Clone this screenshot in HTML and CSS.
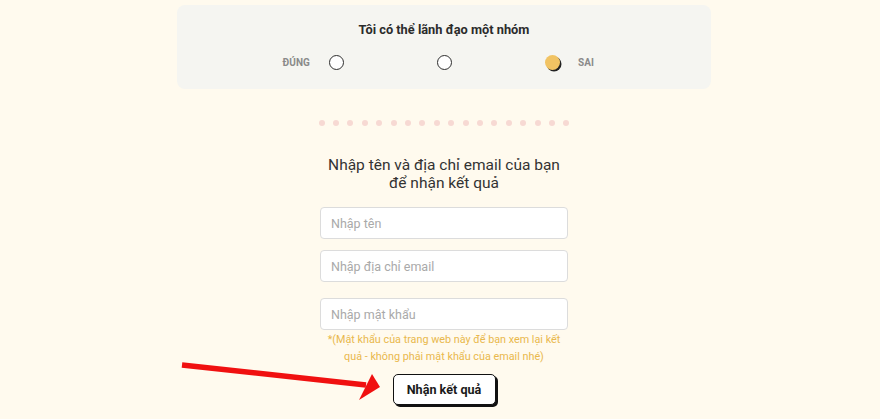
FILE: index.html
```html
<!DOCTYPE html>
<html lang="vi">
<head>
<meta charset="utf-8">
<title>Quiz</title>
<link rel="stylesheet" href="styles.css">
</head>
<body>
<main class="page">
  <section class="card">
    <h2 class="question">Tôi có thể lãnh đạo một nhóm</h2>
    <div class="scale">
      <span class="label label-left">ĐÚNG</span>
      <span class="radio"></span>
      <span class="radio"></span>
      <span class="radio radio-on"></span>
      <span class="label label-right">SAI</span>
    </div>
  </section>

  <div class="dots">
    <i></i><i></i><i></i><i></i><i></i><i></i><i></i><i></i><i></i>
    <i></i><i></i><i></i><i></i><i></i><i></i><i></i><i></i><i></i>
  </div>

  <h1 class="heading">Nhập tên và địa chỉ email của bạn<br>để nhận kết quả</h1>

  <form class="form">
    <input class="field" type="text" placeholder="Nhập tên">
    <input class="field" type="email" placeholder="Nhập địa chỉ email">
    <input class="field field-pass" type="password" placeholder="Nhập mật khẩu">
    <p class="note">*(Mật khẩu của trang web này để bạn xem lại kết<br>quả - không phải mật khẩu của email nhé)</p>
    <button class="submit" type="button">Nhận kết quả</button>
  </form>

  <svg class="arrow" width="880" height="419" viewBox="0 0 880 419">
    <line x1="182" y1="365" x2="366" y2="385" stroke="#f01010" stroke-width="5.5" stroke-linecap="butt"/>
    <polygon points="380,387 372,374 359,400" fill="#f01010"/>
  </svg>
</main>
</body>
</html>
```
FILE: styles.css
```css
* { box-sizing: border-box; }
html, body {
  margin: 0;
  padding: 0;
  background: #fffaee;
  font-family: Roboto, "Noto Sans", sans-serif;
  color: #333;
}
.page {
  position: relative;
  width: 880px;
  height: 419px;
  padding-left: 8px;
  overflow: hidden;
  display: flex;
  flex-direction: column;
  align-items: center;
}
.card {
  width: 534px;
  margin-top: 5px;
  background: #f5f5f1;
  border-radius: 8px;
  padding: 15px 0 19px;
  display: flex;
  flex-direction: column;
  align-items: center;
  gap: 14px;
}
.question {
  margin: 0;
  font-size: 12.8px;
  line-height: 20px;
  font-weight: 700;
  color: #2b2b2b;
}
.scale {
  display: flex;
  align-items: center;
  height: 16px;
}
.label {
  width: 60px;
  font-size: 10px;
  font-weight: 700;
  color: #8a8a8a;
  letter-spacing: 0.1px;
}
.label-left { text-align: right; margin-right: 19px; }
.label-right { text-align: left; margin-left: 18px; }
.radio {
  width: 15px;
  height: 15px;
  border: 1.6px solid #2e2e2e;
  border-radius: 50%;
  background: #fff;
  margin-right: 93px;
}
.radio-on {
  margin-right: 0;
  border: none;
  background: #f1c363;
  box-shadow: 1.5px 1.5px 0 #222;
}
.dots {
  margin-top: 31px;
  display: flex;
  gap: 8.4px;
}
.dots i {
  display: block;
  width: 6px;
  height: 6px;
  border-radius: 50%;
  background: #f7d9d3;
}
.heading {
  margin: 30px 0 0;
  font-size: 15.5px;
  line-height: 18px;
  font-weight: 400;
  text-align: center;
  color: #333;
}
.form {
  margin-top: 15px;
  width: 248px;
  display: flex;
  flex-direction: column;
  align-items: center;
}
.field {
  width: 248px;
  height: 32px;
  margin: 0 0 11px;
  padding: 0 10px;
  border: 1px solid #dcdcdc;
  border-radius: 4px;
  background: #fff;
  font-family: inherit;
  font-size: 12.5px;
  color: #333;
  outline: none;
}
.field::placeholder { color: #a9a9a9; }
.field-pass { margin-top: 5px; margin-bottom: 1px; }
.note {
  margin: 0;
  width: 260px;
  font-size: 10.8px;
  line-height: 17px;
  text-align: center;
  color: #e9b84c;
}
.submit {
  margin-top: 9px;
  width: 103px;
  height: 31px;
  border: 1.5px solid #111;
  border-radius: 5px;
  background: #fff;
  box-shadow: 2px 2px 0 #111;
  font-family: inherit;
  font-size: 12.6px;
  font-weight: 700;
  color: #1a1a1a;
  cursor: pointer;
}
.arrow {
  position: absolute;
  left: 0;
  top: 0;
  pointer-events: none;
}
```
